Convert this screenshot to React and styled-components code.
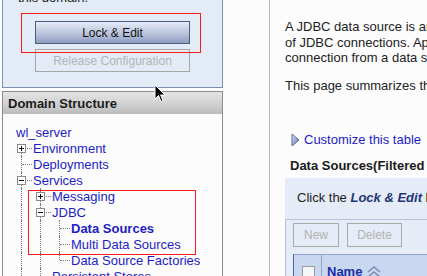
import styled, { createGlobalStyle } from "styled-components";

const GlobalStyle = createGlobalStyle`
  html, body {
    margin: 0;
    padding: 0;
    background: #fcfcfd;
    font-family: "Liberation Sans", Arial, sans-serif;
    font-size: 13px;
    color: #1e1e1e;
  }
`;

// Page frame
const Page = styled.div`
  position: relative;
  display: flex;
  width: 427px;
  height: 276px;
  overflow: hidden;
`;

const Sidebar = styled.div`
  width: 221px;
  padding-left: 2px;
  flex-shrink: 0;
`;

const Gutter = styled.div`
  width: 46px;
  flex-shrink: 0;
  border-right: 1px solid #b4b4b8;
`;

// Change center box (top left)
const ChangeCenter = styled.div`
  position: relative;
  margin-top: -20px;
  padding: 9px 0 15px 32px;
  background: #e2ebf6;
  border: 1px solid #7d90b3;
`;

const Note = styled.div`
  line-height: 16px;
  margin-left: -17px;
  margin-bottom: 15px;
`;

const ButtonStack = styled.div`
  display: flex;
  flex-direction: column;
  gap: 5px;
`;

const WideButton = styled.button`
  width: 155px;
  height: 23px;
  padding: 0;
  font-family: inherit;
  font-size: 12px;
  border: 1px solid ${(p) => (p.disabled ? "#a6a6a6" : "#4d5d7e")};
  color: ${(p) => (p.disabled ? "#b4b4b4" : "#111")};
  background: ${(p) =>
    p.disabled
      ? "transparent"
      : "linear-gradient(to bottom, #e6ebf6 0%, #b9c4dc 55%, #8e9dc0 100%)"};
`;

const Annotation = styled.div`
  position: absolute;
  z-index: 2;
  border: 1px solid #ff1a1a;
  pointer-events: none;
`;

// Domain structure panel
const DomainPanel = styled.div`
  position: relative;
  margin-top: 3px;
  border: 1px solid #8c8c8c;
  border-bottom: none;
  height: 200px;
`;

const PanelHeader = styled.div`
  height: 22px;
  line-height: 23px;
  padding-left: 5px;
  font-weight: bold;
  color: #1c1c1c;
  background: linear-gradient(to bottom, #e4e4e4 0%, #cfcfcf 60%, #bababa 100%);
`;

const Tree = styled.div`
  padding: 10px 0 0 9px;
`;

const Row = styled.div`
  display: flex;
  align-items: stretch;
  height: 16px;
`;

const Cell = styled.div`
  position: relative;
  width: 19px;
  flex-shrink: 0;

  &::before {
    content: "";
    display: ${(p) => (p.$up || p.$down ? "block" : "none")};
    position: absolute;
    left: 9px;
    top: ${(p) => (p.$up ? "0" : "8px")};
    bottom: ${(p) => (p.$down ? "0" : "8px")};
    border-left: 1px dotted #7a7a7a;
  }

  &::after {
    content: "";
    display: ${(p) => (p.$branch ? "block" : "none")};
    position: absolute;
    left: 10px;
    right: -1px;
    top: 8px;
    border-top: 1px dotted #7a7a7a;
  }
`;

const Toggle = styled.span`
  position: absolute;
  z-index: 1;
  left: 5px;
  top: 4px;
  width: 7px;
  height: 7px;
  border: 1px solid #8a8a8a;
  background: #fff;

  &::before,
  &::after {
    content: "";
    position: absolute;
    background: #111;
  }
  &::before {
    left: 1px;
    right: 1px;
    top: 3px;
    height: 1px;
  }
  &::after {
    display: ${(p) => (p.$open ? "none" : "block")};
    top: 1px;
    bottom: 1px;
    left: 3px;
    width: 1px;
  }
`;

const NodeLabel = styled.span`
  margin-left: ${(p) => (p.$root ? "4px" : "2px")};
  line-height: 17px;
  white-space: nowrap;
  color: #1d1dc4;
  font-weight: ${(p) => (p.$bold ? "bold" : "normal")};
`;

// Right content
const Content = styled.div`
  flex: 1;
  min-width: 0;
  padding: 19px 0 0 15px;
  white-space: nowrap;
  overflow: hidden;
`;

const Para = styled.p`
  margin: 0 0 12.5px;
  line-height: 15.5px;
  color: #222;
`;

const CustomizeLink = styled.div`
  display: flex;
  align-items: center;
  gap: 4px;
  height: 16px;
  margin: 38px 0 0 6px;
  color: #1d1dc4;
`;

const TableTitle = styled.div`
  margin: 10px 0 0 5px;
  line-height: 16px;
  font-weight: bold;
  color: #1a1a1a;
`;

const InfoBox = styled.div`
  margin-top: 4px;
  padding-top: 12px;
  background: #e5ecf7;
`;

const InfoText = styled.div`
  padding-left: 12px;
  line-height: 16px;
  margin-bottom: 13px;
  color: #222;

  b {
    font-style: italic;
    color: #1f3576;
  }
`;

const TableArea = styled.div`
  border-top: 1px solid #bcc3d2;
  border-left: 1px solid #bcc3d2;
  padding: 3px 0 0 7px;
  height: 60px;
`;

const Toolbar = styled.div`
  display: flex;
  gap: 8px;
`;

const SmallButton = styled.button`
  width: ${(p) => p.$w}px;
  height: 24px;
  padding: 0;
  font-family: inherit;
  font-size: 12px;
  color: #b2b2b2;
  background: transparent;
  border: 1px solid #a9a9a9;
`;

const HeaderRow = styled.div`
  display: flex;
  margin-top: 7px;
  height: 30px;
  background: #c9d8f0;
  border-left: 1px solid #4d67a3;
  border-top: 1px solid #8fa4cc;
`;

const CheckCol = styled.div`
  width: 28px;
  border-right: 1px solid #8fa4cc;
  padding: 11px 0 0 8px;
  box-sizing: border-box;
`;

const CheckBox = styled.div`
  width: 11px;
  height: 11px;
  border: 1px solid #9a9a9a;
  background: #f4f6fa;
`;

const NameCol = styled.div`
  display: flex;
  align-items: center;
  gap: 4px;
  padding: 4px 0 0 5px;
  font-weight: bold;
  color: #1b2ea6;
`;

const Cursor = styled.svg`
  position: absolute;
  z-index: 3;
  left: 154px;
  top: 84px;
`;

const tree = [
  { label: "wl_server", level: 0 },
  { label: "Environment", level: 1, toggle: "closed", first: true },
  { label: "Deployments", level: 1 },
  { label: "Services", level: 1, toggle: "open" },
  { label: "Messaging", level: 2, toggle: "closed", guides: [true] },
  { label: "JDBC", level: 2, toggle: "open", guides: [true] },
  { label: "Data Sources", level: 3, bold: true, guides: [true, true] },
  { label: "Multi Data Sources", level: 3, guides: [true, true] },
  { label: "Data Source Factories", level: 3, last: true, guides: [true, true] },
  { label: "Persistent Stores", level: 2, guides: [true] },
];

const TreeNode = ({ node }) => {
  if (node.level === 0) {
    return (
      <Row>
        <NodeLabel $root>{node.label}</NodeLabel>
      </Row>
    );
  }
  return (
    <Row>
      {(node.guides || []).map((on, i) => (
        <Cell key={i} $up={on} $down={on} />
      ))}
      <Cell $up={!node.first} $down={!node.last} $branch>
        {node.toggle && <Toggle $open={node.toggle === "open"} />}
      </Cell>
      <NodeLabel $bold={node.bold}>{node.label}</NodeLabel>
    </Row>
  );
};

const App = () => (
  <>
    <GlobalStyle />
    <Page>
      <Sidebar>
        <ChangeCenter>
          <Note>this domain.</Note>
          <ButtonStack>
            <WideButton>Lock &amp; Edit</WideButton>
            <WideButton disabled>Release Configuration</WideButton>
          </ButtonStack>
          <Annotation style={{ left: 18, top: 32, width: 178, height: 38 }} />
        </ChangeCenter>

        <DomainPanel>
          <PanelHeader>Domain Structure</PanelHeader>
          <Tree>
            {tree.map((node) => (
              <TreeNode key={node.label} node={node} />
            ))}
          </Tree>
          <Annotation style={{ left: 25, top: 98, width: 166, height: 63 }} />
        </DomainPanel>
      </Sidebar>

      <Gutter />

      <Content>
        <Para>
          A JDBC data source is an object bound to the JNDI tree that provides database connectivity through a pool
          <br />
          of JDBC connections. Applications can look up a data source on the JNDI tree and then borrow a database
          <br />
          connection from a data source.
        </Para>
        <Para>This page summarizes the JDBC data source objects that have been created in this domain.</Para>

        <CustomizeLink>
          <svg width="9" height="14" viewBox="0 0 9 14">
            <defs>
              <linearGradient id="tri" x1="0" y1="0" x2="1" y2="1">
                <stop offset="0" stopColor="#e4eaf7" />
                <stop offset="1" stopColor="#4f6aa8" />
              </linearGradient>
            </defs>
            <polygon points="1,1 8,7 1,13" fill="url(#tri)" stroke="#5a6f9e" strokeWidth="1" />
          </svg>
          Customize this table
        </CustomizeLink>

        <TableTitle>Data Sources(Filtered - More Columns Exist)</TableTitle>

        <InfoBox>
          <InfoText>
            Click the <b>Lock &amp; Edit</b> button in the Change Center to activate all the buttons on this page.
          </InfoText>
          <TableArea>
            <Toolbar>
              <SmallButton $w={46} disabled>New</SmallButton>
              <SmallButton $w={55} disabled>Delete</SmallButton>
            </Toolbar>
            <HeaderRow>
              <CheckCol>
                <CheckBox />
              </CheckCol>
              <NameCol>
                Name
                <svg width="16" height="12" viewBox="0 0 16 12">
                  <polyline points="2,6 8,1 14,6" fill="none" stroke="#7d8fb5" strokeWidth="1.6" />
                  <polyline points="2,11 8,6 14,11" fill="none" stroke="#7d8fb5" strokeWidth="1.6" />
                </svg>
              </NameCol>
            </HeaderRow>
          </TableArea>
        </InfoBox>
      </Content>

      <Cursor width="12" height="19" viewBox="0 0 12 19">
        <path d="M1 1 L1 15 L4.5 11.5 L7 17.5 L9 16.6 L6.6 11 L11 11 Z" fill="#000" stroke="#fff" strokeWidth="1" />
      </Cursor>
    </Page>
  </>
);

export default App;
